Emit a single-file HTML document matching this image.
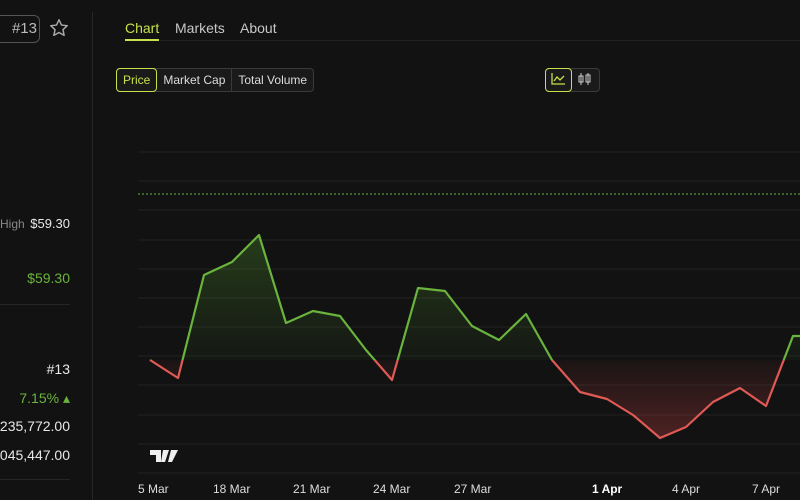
<!DOCTYPE html>
<html><head><style>
body{margin:0;width:800px;height:500px;background:#121212;overflow:hidden;font-family:"Liberation Sans",sans-serif;position:relative;color:#e8e8e8}
.a{position:absolute}
.tab{font-size:14px;color:#c8c8c8}
.seg{position:absolute;top:68px;left:116px;height:22px;border:1px solid #3a3a3a;border-radius:4px;display:flex;font-size:12px;background:#1a1a1a}
.seg div{padding:0 6px;line-height:22px;color:#ddd;border-right:1px solid #3a3a3a}
.seg div:last-child{border-right:none}
</style></head><body>
<div class="a" style="left:-12px;top:15px;width:48px;height:26px;border:1px solid #555;border-radius:6px;font-size:15px;color:#bbb;line-height:26px;text-align:right;padding-right:2px">#13</div>
<svg class="a" style="left:48px;top:17px" width="22" height="22" viewBox="0 0 24 24"><path d="M12 3l2.7 5.8 6.3.7-4.7 4.3 1.3 6.2L12 16.9 6.4 20l1.3-6.2L3 9.5l6.3-.7z" fill="none" stroke="#aaa" stroke-width="1.6" stroke-linejoin="round"/></svg>
<div class="a" style="left:92px;top:12px;width:1px;height:488px;background:#262626"></div>
<div class="a tab" style="left:125px;top:20px;color:#c6e24a">Chart</div>
<div class="a" style="left:125px;top:39px;width:34px;height:2px;background:#c6e24a"></div>
<div class="a tab" style="left:175px;top:20px">Markets</div>
<div class="a tab" style="left:240px;top:20px">About</div>
<div class="a" style="left:160px;top:40px;width:640px;height:1px;background:#222"></div>
<div class="seg"><div style="color:#c6e24a;border:1px solid #c6e24a;border-radius:4px;margin:-1px 0 -1px -1px;line-height:22px">Price</div><div>Market Cap</div><div>Total Volume</div></div>
<div class="a" style="left:545px;top:68px;width:53px;height:22px;border:1px solid #3a3a3a;border-radius:4px;background:#1a1a1a"></div>
<div class="a" style="left:545px;top:68px;width:25px;height:22px;border:1px solid #c6e24a;border-radius:4px"></div>
<svg class="a" style="left:550px;top:72px" width="16" height="14"><path d="M2 1v11h13M4 9l3-4 3 3 4-4" fill="none" stroke="#c6e24a" stroke-width="1.3"/></svg>
<svg class="a" style="left:577px;top:72px" width="16" height="14"><path d="M4 1v12M11 1v12" stroke="#ccc" stroke-width="1"/><rect x="2" y="4" width="4" height="6" fill="none" stroke="#ccc"/><rect x="9" y="3" width="4" height="7" fill="none" stroke="#ccc"/></svg>
<div class="a" style="left:0;top:217px;font-size:12px;color:#888">High</div>
<div class="a" style="top:216px;font-size:13px;width:100px;left:-30px;text-align:right">$59.30</div>
<div class="a" style="left:-30px;width:100px;text-align:right;top:270px;font-size:14px;color:#6ab33c">$59.30</div>
<div class="a" style="left:0;top:304px;width:70px;height:1px;background:#262626"></div>
<div class="a" style="left:-30px;width:100px;text-align:right;top:361px;font-size:14px">#13</div>
<div class="a" style="left:-30px;width:100px;text-align:right;top:390px;font-size:14px;color:#6ab33c">7.15% ▴</div>
<div class="a" style="left:-50px;width:120px;text-align:right;top:418px;font-size:14px">1,235,772.00</div>
<div class="a" style="left:-50px;width:120px;text-align:right;top:447px;font-size:14px">3,045,447.00</div>
<div class="a" style="left:0;top:479px;width:70px;height:1px;background:#262626"></div>
<svg class="a" style="left:0;top:0" width="800" height="500">
<defs>
<linearGradient id="g" x1="0" y1="235" x2="0" y2="360" gradientUnits="userSpaceOnUse"><stop offset="0" stop-color="#4a8a2a" stop-opacity=".35"/><stop offset="1" stop-color="#4a8a2a" stop-opacity=".05"/></linearGradient>
<linearGradient id="rd" x1="0" y1="360" x2="0" y2="440" gradientUnits="userSpaceOnUse"><stop offset="0" stop-color="#c04040" stop-opacity=".05"/><stop offset="1" stop-color="#c04040" stop-opacity=".35"/></linearGradient>
<clipPath id="up"><rect x="0" y="0" width="800" height="360"/></clipPath>
<clipPath id="dn"><rect x="0" y="360" width="800" height="140"/></clipPath>
</defs>
<g stroke="#232323" stroke-width="1">
<line x1="138" y1="152" x2="800" y2="152"/><line x1="138" y1="181" x2="800" y2="181"/><line x1="138" y1="210" x2="800" y2="210"/><line x1="138" y1="240" x2="800" y2="240"/><line x1="138" y1="269" x2="800" y2="269"/><line x1="138" y1="298" x2="800" y2="298"/><line x1="138" y1="327" x2="800" y2="327"/><line x1="138" y1="356" x2="800" y2="356"/><line x1="138" y1="385" x2="800" y2="385"/><line x1="138" y1="415" x2="800" y2="415"/><line x1="138" y1="444" x2="800" y2="444"/><line x1="138" y1="473" x2="800" y2="473"/>
</g>
<line x1="138" y1="194" x2="800" y2="194" stroke="#6ab33c" stroke-dasharray="2,2" stroke-width="1"/>
<polygon clip-path="url(#up)" fill="url(#g)" points="150,360 178,378 204,275 232,262 259,235 286,323 313,311 340,316 366,350 392,380 418,288 445,291 472,326 499,340 526,314 552,360 580,392 607,399 633,415 660,438 686,427 713,402 740,388 766,406 793,336 800,336 800,360 150,360"/>
<polygon clip-path="url(#dn)" fill="url(#rd)" points="150,360 178,378 204,275 232,262 259,235 286,323 313,311 340,316 366,350 392,380 418,288 445,291 472,326 499,340 526,314 552,360 580,392 607,399 633,415 660,438 686,427 713,402 740,388 766,406 793,336 800,336 800,360 150,360"/>
<polyline clip-path="url(#up)" fill="none" stroke="#6ab33c" stroke-width="2.2" stroke-linejoin="round" points="150,360 178,378 204,275 232,262 259,235 286,323 313,311 340,316 366,350 392,380 418,288 445,291 472,326 499,340 526,314 552,360 580,392 607,399 633,415 660,438 686,427 713,402 740,388 766,406 793,336 800,336"/>
<polyline clip-path="url(#dn)" fill="none" stroke="#e05a55" stroke-width="2.2" stroke-linejoin="round" points="150,360 178,378 204,275 232,262 259,235 286,323 313,311 340,316 366,350 392,380 418,288 445,291 472,326 499,340 526,314 552,360 580,392 607,399 633,415 660,438 686,427 713,402 740,388 766,406 793,336 800,336"/>
<path d="M150 450h11v12h-5v-7h-6zM163 450h6l-4 12h-4z M171 450h7l-6 12h-4z" fill="#eee"/>
<g fill="#ddd" font-size="12" font-family="Liberation Sans">
<text x="138" y="493">5 Mar</text><text x="213" y="493">18 Mar</text><text x="293" y="493">21 Mar</text><text x="373" y="493">24 Mar</text><text x="454" y="493">27 Mar</text><text x="592" y="493" font-weight="bold" fill="#fff">1 Apr</text><text x="672" y="493">4 Apr</text><text x="752" y="493">7 Apr</text>
</g>
</svg>
</body></html>
